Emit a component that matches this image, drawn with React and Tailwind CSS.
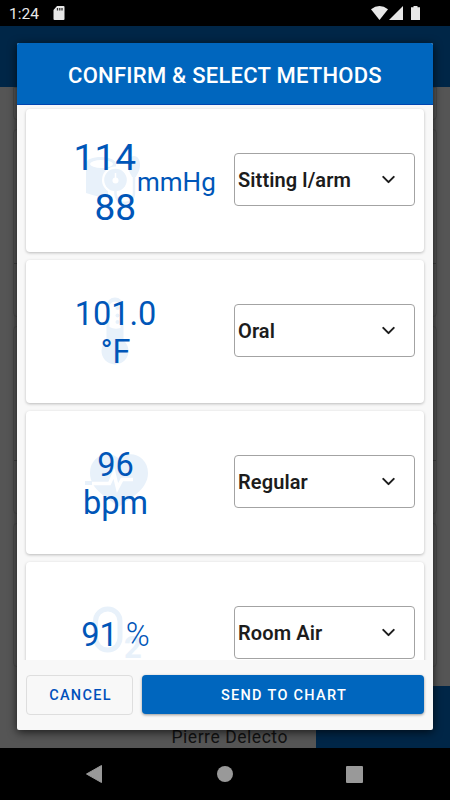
import { ChevronDown } from "lucide-react";

const backdropCards = [
  { id: "summary", className: "h-[33px] rounded-t-none" },
  { id: "pressure", className: "mt-[9px] h-[188px]", line: "top-[133px]" },
  { id: "temperature", className: "mt-[9px] h-[188px]", line: "top-[133px]" },
  { id: "oxygen", className: "mt-[9px] h-[144px]" },
];

function StatusBar() {
  return (
    <div className="flex h-[26px] shrink-0 items-center bg-black pl-[9px] pr-[30px]">
      <span className="text-[15.5px] leading-[26px] text-[#e8e8e8] pt-[2px]">1:24</span>
      <svg className="ml-[14px]" width="12" height="14" viewBox="0 0 12 14">
        <path d="M4 0h6.500q1 0 1 1v12q0 1-1 1H1.500q-1 0-1-1V4z" fill="#e8e8e8" />
        <path d="M4.500 2v2.500M6.800 2v2.500M9 2v2.500" stroke="#333" strokeWidth="1.300" />
      </svg>
      <svg className="ml-auto" width="17" height="14" viewBox="0 0 17 14">
        <path d="M0 3.200Q8.500-3.200 17 3.200L8.500 14z" fill="#e8e8e8" />
      </svg>
      <svg className="ml-[1px]" width="14" height="14" viewBox="0 0 14 14">
        <path d="M14 0v14H0z" fill="#e8e8e8" />
      </svg>
      <svg className="ml-[8px]" width="9" height="14" viewBox="0 0 9 14">
        <path d="M2.500 0h4v1.300H9V14H0V1.300h2.500z" fill="#e8e8e8" />
      </svg>
    </div>
  );
}

function NavBar() {
  return (
    <div className="flex h-[52px] shrink-0 items-center bg-black pl-[86px] pr-[87px] justify-between">
      <svg width="16" height="18" viewBox="0 0 16 18">
        <path d="M15.500 0.500v17L0.500 9z" fill="#999" stroke="#999" strokeLinejoin="round" />
      </svg>
      <div className="ml-px size-4 rounded-full bg-[#999]" />
      <div className="size-[17px] rounded-[1px] bg-[#999]" />
    </div>
  );
}

function Backdrop() {
  return (
    <div className="flex h-full flex-col">
      <StatusBar />
      <div className="h-[61px] shrink-0 bg-[#002647]" />
      <div className="flex-1 px-[13px]">
        {backdropCards.map((card) => (
          <div key={card.id} className={`relative rounded border border-[#4b4b4b] bg-[#565656] ${card.className}`}>
            {card.line && <div className={`absolute inset-x-0 h-px bg-[#404040] ${card.line}`} />}
          </div>
        ))}
      </div>
      <div className="flex h-[62px] shrink-0 bg-[#555]">
        <div className="flex w-[316px] items-end justify-end pr-[28px] text-[17.5px] leading-[22px] tracking-[0.550px] text-[#121212]">
          Pierre Delecto
        </div>
        <div className="flex-1 bg-[#002647]" />
      </div>
      <NavBar />
    </div>
  );
}

function CuffIcon() {
  return (
    <svg className="absolute left-[59px] top-[46px]" width="56" height="54" viewBox="0 0 56 54" fill="none">
      <path d="M1 9C1 4 8 2 16 2s15 3 15 7v31q-8 4-16 2T1 38z" fill="#e8f1fa" />
      <ellipse cx="16.500" cy="9" rx="11.500" ry="4" fill="#fff" />
      <circle cx="30.500" cy="25" r="13.500" fill="#fff" />
      <path d="M23 36h10v8H23z" fill="#fff" />
      <circle cx="30.500" cy="25" r="11.300" fill="#e8f1fa" />
      <circle cx="30.500" cy="25.500" r="3" fill="#fff" />
      <path d="M30.500 18v7" stroke="#fff" strokeWidth="1.500" />
      <path d="M49 1c4 0 6 4 6 9 0 6-3 9-4 12h-4c-1-3-4-6-4-12 0-5 2-9 6-9z" fill="#e8f1fa" />
      <path d="M49 20v18c0 12-17 14-18.500 1v-4" stroke="#e8f1fa" strokeWidth="2.500" />
    </svg>
  );
}

function ThermometerIcon() {
  return (
    <svg className="absolute left-[75px] top-[37px]" width="28" height="69" viewBox="0 0 28 69">
      <path d="M5.500 9a8.500 8.500 0 0 1 17 0v34.500a13.500 13.500 0 1 1-17 0z" fill="#e8f1fa" />
      <path d="M8.500 10a5.500 5.500 0 0 1 11 0v21q-6 2-11-1z" fill="#fff" />
      <circle cx="16.500" cy="11" r="2" fill="#e8f1fa" />
      <circle cx="16.500" cy="18.500" r="2" fill="#e8f1fa" />
      <circle cx="16.500" cy="25" r="2" fill="#e8f1fa" />
    </svg>
  );
}

function HeartIcon() {
  return (
    <svg className="absolute left-[59px] top-[43px]" width="64" height="53" viewBox="0 0 64 53" fill="none">
      <path d="M34 52.500C22 44 5 35 5 19 5 2 23-5 34 4.500 45-5 63 2 63 19c0 16-17 25-29 33.500z" fill="#e8f1fa" />
      <path d="M0 29h7" stroke="#e8f1fa" strokeWidth="4" />
      <path d="M7 29.500h17.500l4.500-10 3.500 14.500 4.500-8.500h11" stroke="#fff" strokeWidth="3.500" />
    </svg>
  );
}

function OxygenIcon() {
  return (
    <svg className="absolute left-[66px] top-[44px]" width="50" height="54" viewBox="0 0 50 54" fill="none">
      <rect x="3.500" y="3" width="24.500" height="41" rx="12.250" stroke="#e8f1fa" strokeWidth="5" />
      <text x="32" y="51.500" fill="#e8f1fa" fontSize="31" fontWeight="700">2</text>
    </svg>
  );
}

const vitals = [
  {
    id: "pressure",
    icon: CuffIcon,
    method: "Sitting l/arm",
    value: (
      <div className="relative flex items-center pt-[4px]">
        <div className="w-[110px] text-right text-[37px] leading-[50px]">
          <p>114</p>
          <p>88</p>
        </div>
        <p className="pb-px pl-px text-[26px] leading-8">mmHg</p>
      </div>
    ),
  },
  {
    id: "temperature",
    icon: ThermometerIcon,
    method: "Oral",
    value: (
      <div className="relative w-[179px] pt-[2px] text-center text-[32.5px] leading-[38px]">
        <p>101.0</p>
        <p>°F</p>
      </div>
    ),
  },
  {
    id: "pulse",
    icon: HeartIcon,
    method: "Regular",
    value: (
      <div className="relative w-[179px] pt-[2px] text-center text-[32.5px] leading-[38px]">
        <p>96</p>
        <p>bpm</p>
      </div>
    ),
  },
  {
    id: "oxygen",
    icon: OxygenIcon,
    method: "Room Air",
    value: (
      <div className="relative flex w-[179px] items-baseline justify-center gap-[8px] pt-[3px] text-[32.5px] leading-[38px]">
        <p>91</p>
        <p className="font-light">%</p>
      </div>
    ),
  },
];

function VitalCard({ vital }) {
  const Icon = vital.icon;

  return (
    <div className="relative flex h-[143px] shrink-0 items-center rounded bg-white shadow-[0_1px_3px_rgba(0,0,0,0.25)]">
      <Icon />
      <div className="w-[208px] shrink-0 text-[#0056b8]">{vital.value}</div>
      <button className="mb-[2px] flex h-[53px] w-[181px] items-center justify-between rounded border border-[#a3a3a3] pl-[3px] pr-[15px] text-[20px] font-semibold tracking-[0.100px] text-[#1c1c1c]">
        {vital.method}
        <ChevronDown size={21} strokeWidth={2.3} />
      </button>
    </div>
  );
}

function ConfirmDialog() {
  return (
    <div className="absolute left-[17px] top-[43px] flex h-[687px] w-[416px] flex-col overflow-hidden rounded-[2px] bg-[#f8f8f8] shadow-[0_2px_10px_rgba(0,0,0,0.7)]">
      <h1 className="flex h-[62px] shrink-0 items-center justify-center border-b border-[#0045b0] bg-[#0066be] pt-[4px] text-[22px] font-medium tracking-[0.250px] text-white">
        CONFIRM &amp; SELECT METHODS
      </h1>
      <div className="flex h-[555px] shrink-0 flex-col gap-2 overflow-hidden px-[9px] pt-1">
        {vitals.map((vital) => (
          <VitalCard key={vital.id} vital={vital} />
        ))}
      </div>
      <div className="flex gap-[9px] px-[9px] pt-[15px]">
        <button className="h-[40px] w-[107px] rounded border border-[#dedede] pl-[2px] pt-[2px] text-[14.5px] font-medium tracking-[1.300px] text-[#0050bc]">
          CANCEL
        </button>
        <button className="h-[39px] flex-1 rounded bg-[#0066be] pl-[2px] pt-[3px] text-[14.5px] font-medium tracking-[1.300px] text-white shadow-[0_1px_3px_rgba(0,0,0,0.4)]">
          SEND TO CHART
        </button>
      </div>
    </div>
  );
}

export default function App() {
  return (
    <div className="relative h-[800px] w-[450px] overflow-hidden bg-[#555] font-[Roboto,sans-serif]">
      <Backdrop />
      <ConfirmDialog />
    </div>
  );
}
